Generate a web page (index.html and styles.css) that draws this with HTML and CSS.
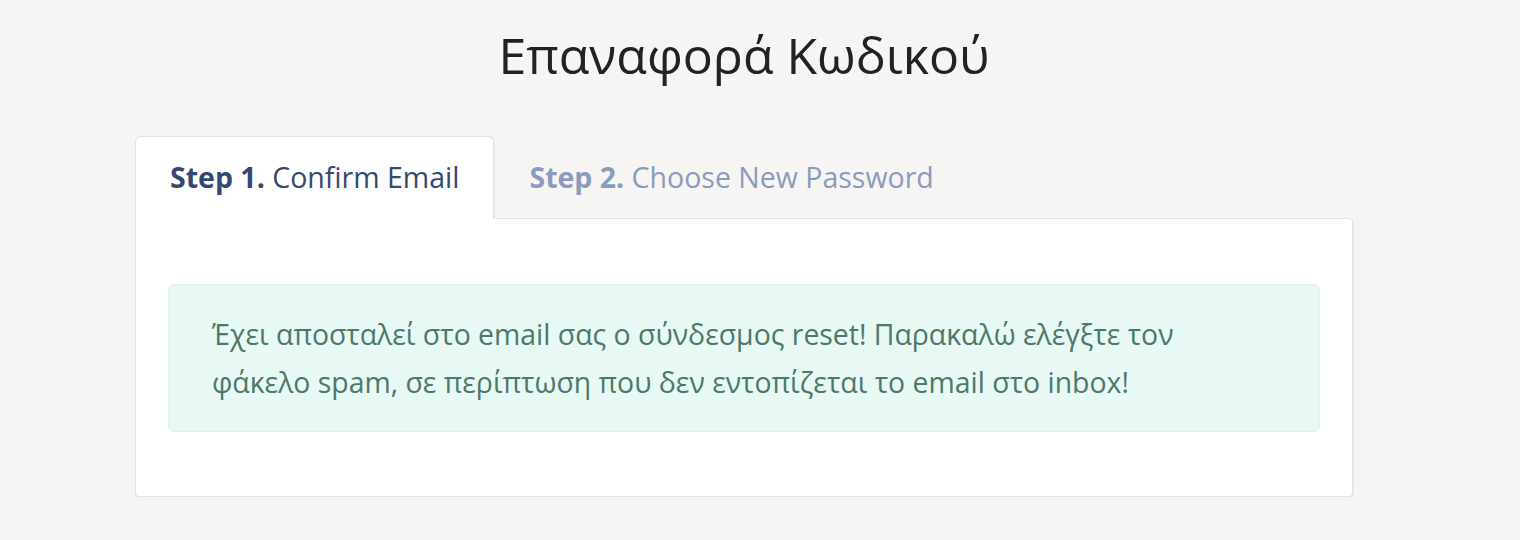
FILE: index.html
```html
<!DOCTYPE html>
<html lang="el">
<head>
<meta charset="utf-8">
<title>Επαναφορά Κωδικού</title>
<link rel="stylesheet" href="styles.css">
</head>
<body>
<div class="container">
  <h1 class="title">Επαναφορά Κωδικού</h1>
  <div class="tabs">
    <div class="tab active"><b>Step 1.</b> Confirm Email</div>
    <div class="tab"><b>Step 2.</b> Choose New Password</div>
  </div>
  <div class="card">
    <div class="alert">Έχει αποσταλεί στο email σας ο σύνδεσμος reset! Παρακαλώ ελέγξτε τον φάκελο spam, σε περίπτωση που δεν εντοπίζεται το email στο inbox!</div>
  </div>
</div>
</body>
</html>
```
FILE: styles.css
```css
html, body {
  margin: 0;
  padding: 0;
  background: #f6f5f3;
}
body {
  font-family: "Open Sans", "Noto Sans", sans-serif;
  color: #222;
}
.container {
  width: 1218px;
  margin-left: 135px;
}
.title {
  margin: 0;
  padding-top: 22px;
  height: 114px;
  box-sizing: border-box;
  text-align: center;
  font-weight: 400;
  font-size: 50px;
  line-height: 66px;
  color: #222;
}
.tabs {
  display: flex;
  height: 83px;
  position: relative;
  z-index: 1;
  margin-top: 22px;
}
.tab {
  padding: 0 34px;
  font-size: 28.5px;
  line-height: 81px;
  color: #8a9cbd;
  border: 1px solid transparent;
  border-bottom: none;
  border-radius: 6px 6px 0 0;
  white-space: nowrap;
}
.tab b { font-weight: 700; }
.tab.active {
  background: #fff;
  border-color: #dfe3ee;
  color: #34496f;
  height: 83px;
  box-sizing: border-box;
  box-shadow: 1px 0 0 #e6e9f1;
}
.card {
  margin-top: -1px;
  background: #fff;
  border: 1px solid #dfe3ee;
  border-radius: 0 4px 4px 4px;
  box-shadow: 1px 1px 0 #e6e9f1;
  padding: 65px 32px 64px;
}
.alert {
  background: #e8f8f4;
  border: 1px solid #dff3ee;
  border-radius: 6px;
  padding: 25px 80px 25px 43px;
  font-size: 28.4px;
  line-height: 48px;
  color: #4b796a;
}
```
